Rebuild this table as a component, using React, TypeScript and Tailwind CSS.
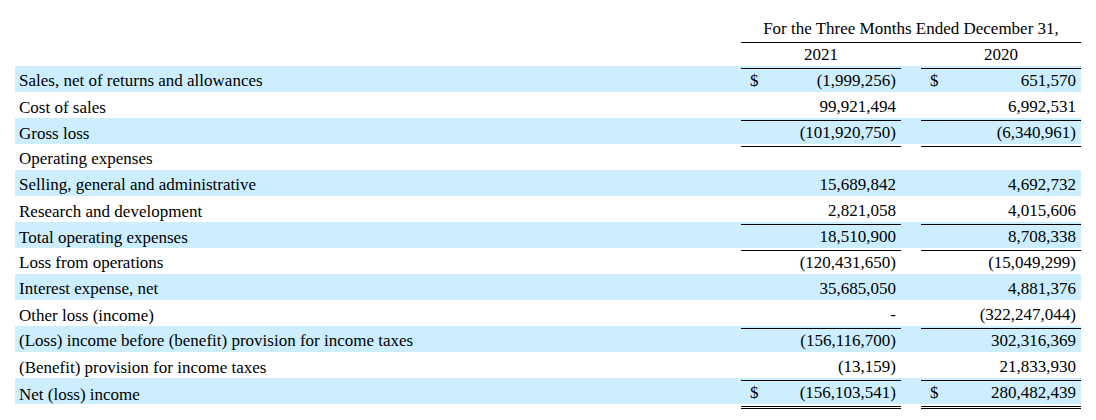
type Row = {
  label: string;
  a: string;
  b: string;
  dollar?: boolean;
  line?: "single" | "double";
};

const rows: Row[] = [
  { label: "Sales, net of returns and allowances", a: "(1,999,256)", b: "651,570", dollar: true },
  { label: "Cost of sales", a: "99,921,494", b: "6,992,531", line: "single" },
  { label: "Gross loss", a: "(101,920,750)", b: "(6,340,961)", line: "single" },
  { label: "Operating expenses", a: "", b: "" },
  { label: "Selling, general and administrative", a: "15,689,842", b: "4,692,732" },
  { label: "Research and development", a: "2,821,058", b: "4,015,606", line: "single" },
  { label: "Total operating expenses", a: "18,510,900", b: "8,708,338", line: "single" },
  { label: "Loss from operations", a: "(120,431,650)", b: "(15,049,299)" },
  { label: "Interest expense, net", a: "35,685,050", b: "4,881,376" },
  { label: "Other loss (income)", a: "-", b: "(322,247,044)", line: "single" },
  { label: "(Loss) income before (benefit) provision for income taxes", a: "(156,116,700)", b: "302,316,369" },
  { label: "(Benefit) provision for income taxes", a: "(13,159)", b: "21,833,930", line: "single" },
  { label: "Net (loss) income", a: "(156,103,541)", b: "280,482,439", dollar: true, line: "double" },
];

function Amount({ value, dollar, line }: { value: string; dollar?: boolean; line?: Row["line"] }) {
  const border =
    line === "double"
      ? "border-b-[3px] border-double border-black"
      : line === "single"
        ? "border-b border-black"
        : "";
  return (
    <div className={`flex items-center justify-between pl-[9px] pr-[5px] ${border}`}>
      <span>{dollar ? "$" : ""}</span>
      <span>{value}</span>
    </div>
  );
}

export default function App() {
  return (
    <div className="bg-white w-[1096px] h-[420px] pt-[14px] pl-[15px] font-['Liberation_Serif',serif] text-[17px] text-black">
      <div className="w-[1066px]">
        <div className="grid grid-cols-[726px_340px] h-[26px] pt-[2px]">
          <div />
          <div className="border-b border-black flex items-center justify-center">
            For the Three Months Ended December 31,
          </div>
        </div>
        <div className="grid grid-cols-[726px_160px_20px_160px] h-[26px] pt-[2px]">
          <div />
          <div className="border-b border-black flex items-center justify-center">2021</div>
          <div />
          <div className="border-b border-black flex items-center justify-center">2020</div>
        </div>
        {rows.map((r, i) => (
          <div
            key={r.label}
            className={`grid grid-cols-[726px_160px_20px_160px] h-[26px] pt-[2px] ${i % 2 === 0 ? "bg-[#cceeff]" : "bg-white"}`}
          >
            <div className="flex items-center pl-[4px]">{r.label}</div>
            <Amount value={r.a} dollar={r.dollar} line={r.line} />
            <div />
            <Amount value={r.b} dollar={r.dollar} line={r.line} />
          </div>
        ))}
      </div>
    </div>
  );
}
